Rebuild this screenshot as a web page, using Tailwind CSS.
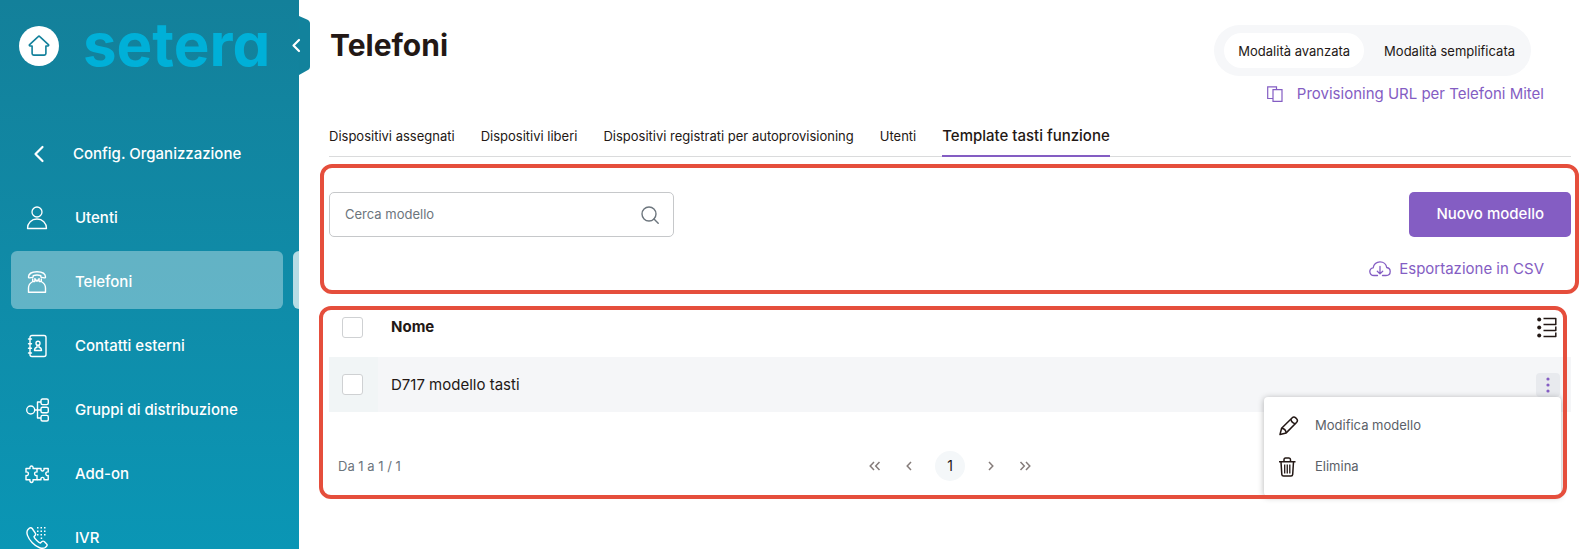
<!DOCTYPE html>
<html lang="it">
<head>
    <meta charset="UTF-8">
    <meta name="viewport" content="width=device-width, initial-scale=1.0">
    <title>Telefoni</title>
    <script src="https://cdn.jsdelivr.net/npm/@tailwindcss/browser@4"></script>
</head>
<body class="flex h-screen overflow-hidden bg-white font-['Inter',sans-serif] text-[13px] text-[#231815]">

    <!-- Sidebar -->
    <aside class="relative flex w-[299px] shrink-0 flex-col bg-linear-to-b from-[#13809a] to-[#0a96b5] text-white">
        <div class="flex h-[123px] shrink-0 items-start pt-[26px] pl-[19px]">
            <a href="#" aria-label="Home" class="flex size-10 items-center justify-center rounded-full bg-white text-[#12809b]">
                <svg class="size-6" viewBox="0 0 24 24" fill="none" stroke="currentColor" stroke-width="1.6" stroke-linejoin="round" stroke-linecap="round">
                    <path d="M11.2 2.6 2.6 10.6c-.6.6-.3 1.4.6 1.4h1.9v7.5c0 1 .6 1.6 1.6 1.6h10.6c1 0 1.6-.6 1.6-1.6V12h1.9c.9 0 1.2-.8.6-1.4L12.8 2.6c-.5-.5-1.1-.5-1.6 0Z"/>
                </svg>
            </a>
            <span class="ml-6 text-[60px] leading-9 font-bold text-[#00b0d8] [font-feature-settings:'cv11']">setera</span>
        </div>

        <nav class="flex min-h-0 flex-1 flex-col gap-1.5 overflow-hidden text-[15px] font-medium">
            <a href="#" class="mr-4 ml-[11px] flex h-[58px] shrink-0 items-center gap-[22px] pt-1 pl-4">
                <svg class="size-6" viewBox="0 0 24 24" fill="none" stroke="currentColor" stroke-width="2.2" stroke-linecap="round" stroke-linejoin="round"><path d="M15.5 5 8.500 12l7 7"/></svg>
                Config. Organizzazione
            </a>
            <a href="#" class="mr-4 ml-[11px] flex h-[58px] shrink-0 items-center gap-[26px] pt-1 pl-3.5">
                <svg class="size-6" viewBox="0 0 24 24" fill="none" stroke="currentColor" stroke-width="1.3" stroke-linejoin="round"><circle cx="12" cy="6" r="5"/><path d="M2.500 22.500c0-5.500 4-9.500 9.500-9.500s9.500 4 9.500 9.500Z"/></svg>
                Utenti
            </a>
            <div class="flex h-[58px] shrink-0 items-stretch justify-between">
                <a href="#" aria-current="page" class="mr-2.5 ml-[11px] flex flex-1 items-center gap-[26px] rounded-md bg-white/35 pt-1 pl-3.5">
                    <svg class="size-6" viewBox="0 0 24 24" fill="none" stroke="currentColor" stroke-width="1.4" stroke-linejoin="round" stroke-linecap="round">
                        <path d="M3.500 7c0-3.500 3.700-5.300 8.500-5.300s8.500 1.800 8.500 5.300c0 .7-.4 1-1 .9l-2.900-.5c-.6-.1-.8-.5-.8-1V5.700c-2.200-.8-5.400-.8-7.600 0v.7c0 .5-.2.900-.8 1l-2.900.5c-.6.1-1-.2-1-.9Z"/>
                        <path d="M7.700 9v2.500C5.500 12.700 3.500 15.500 3.500 18v4.300h17V18c0-2.500-2-5.300-4.200-6.500V9M7.700 11.500h2.200V8.700M16.300 11.500h-2.200V8.700M9.900 8.700l2.100 2.500 2.100-2.500"/>
                    </svg>
                    Telefoni
                </a>
                <span class="w-1.5 rounded-l-md bg-white/70"></span>
            </div>
            <a href="#" class="mr-4 ml-[11px] flex h-[58px] shrink-0 items-center gap-[26px] pt-1 pl-3.5">
                <svg class="size-6" viewBox="0 0 24 24" fill="none" stroke="currentColor" stroke-width="1.4" stroke-linejoin="round" stroke-linecap="round">
                    <rect x="5" y="1.500" width="16" height="21" rx="2"/>
                    <path d="M3.500 5h3M3.500 9.700h3M3.500 14.300h3M3.500 19h3"/>
                    <circle cx="13" cy="9.300" r="2"/>
                    <path d="M12 11.500v1.700c-1.500.3-2.500 1.300-2.500 3.300h7c0-2-1-3-2.500-3.300v-1.700"/>
                </svg>
                Contatti esterni
            </a>
            <a href="#" class="mr-4 ml-[11px] flex h-[58px] shrink-0 items-center gap-[26px] pt-1 pl-3.5">
                <svg class="size-6" viewBox="0 0 24 24" fill="none" stroke="currentColor" stroke-width="1.4" stroke-linejoin="round">
                    <circle cx="5.700" cy="12" r="4"/>
                    <path d="M9.700 12H16M16 4h-3.500v16H16"/>
                    <rect x="16" y="1" width="7.300" height="5.600" rx="1.500"/><rect x="16" y="9.200" width="7.300" height="5.600" rx="1.500"/><rect x="16" y="17.400" width="7.300" height="5.600" rx="1.500"/>
                </svg>
                Gruppi di distribuzione
            </a>
            <a href="#" class="mr-4 ml-[11px] flex h-[58px] shrink-0 items-center gap-[26px] pt-1 pl-3.5">
                <svg class="size-6" viewBox="0 0 24 24" fill="none" stroke="currentColor" stroke-width="1.4" stroke-linejoin="round">
                    <path d="M1 6.500h4c-.8-3.300 3.800-3.300 3 0h4V10c-3.200-.8-3.200 4.300 0 3.500v4.300H8c.8 3.500-3.800 3.500-3 0H1v-4.300c3.200.8 3.200-4.300 0-3.500Z"/>
                    <path d="M12 6.500h4c-.8 3.300 3.800 3.300 3 0h4.200V10c-3.200-.8-3.200 4.300 0 3.500v4.300H19c.8-3.300-3.800-3.300-3 0h-4"/>
                </svg>
                Add-on
            </a>
            <a href="#" class="mr-4 ml-[11px] flex h-[58px] shrink-0 items-center gap-[26px] pt-1 pl-3.5">
                <svg class="size-6" viewBox="0 0 24 24" fill="none" stroke="currentColor" stroke-width="1.4" stroke-linejoin="round">
                    <path d="M4.300 2.300 2.800 3.800c-2 2.500-.3 8 4.500 13s10.200 6.600 13 4.700l1.300-1.300c.7-.7.7-1.500 0-2.200l-2.400-2.400c-.7-.7-1.600-.7-2.200 0l-1.600 1.500c-1.500-.3-5.900-4.600-6.400-6.300l1.200-1.500c.7-.7.5-1.500.1-2.200L7.200 2.500c-.8-1-2-1.100-2.900-.2Z"/>
                    <path d="M12 1.700h10.500M12 5.200h10.500M12 8.700h10.500M15.700 12.200h3" stroke-width="1.500" stroke-dasharray="1.500 2"/>
                </svg>
                IVR
            </a>
        </nav>

        <!-- Collapse handle -->
        <button type="button" aria-label="Chiudi menu" class="absolute top-4 left-full h-[59px] w-[11px]">
            <svg class="absolute top-0 -left-2.5" width="21" height="59" viewBox="0 0 21 59" fill="none">
                <path d="M10 0 18 3.500c2 1 3 2 3 4v43c0 2-1 3-3 4L10 59Z" fill="#12829c"/>
                <path d="m10 24-5.500 5.500L10 35" stroke="#fff" stroke-width="2.2" stroke-linecap="round" stroke-linejoin="round"/>
            </svg>
        </button>
    </aside>

    <main class="min-w-0 flex-1 pt-[25px] pr-[13px] pl-[30px]">
        <header class="flex items-start justify-between">
            <h1 class="pl-px text-[30px] leading-10 font-bold">Telefoni</h1>
            <div class="flex flex-col items-end">
                <div class="mr-10 flex h-[51px] items-center rounded-full bg-[#f6f7f9] pr-4 pl-2.5">
                    <button type="button" aria-pressed="true" class="h-[35px] rounded-full bg-white px-3.5 pt-[3px]">Modalità avanzata</button>
                    <button type="button" aria-pressed="false" class="ml-5 h-[35px] pt-[3px]">Modalità semplificata</button>
                </div>
                <a href="#" class="mt-1.5 mr-[27px] flex h-6 items-center gap-3.5 text-[15px] text-[#845dc3]">
                    <svg class="size-4" viewBox="0 0 16 16" fill="none" stroke="currentColor" stroke-width="1.2"><path d="M6 12.500H.7V.8h8.800v2.800"/><path d="M6 3.600h9v11.700H6Z"/></svg>
                    Provisioning URL per Telefoni Mitel
                </a>
            </div>
        </header>

        <nav class="mt-5 flex gap-[26px] border-b border-[#dadbdc] leading-5">
            <a href="#" class="-mb-px pb-[11px]">Dispositivi assegnati</a>
            <a href="#" class="-mb-px pb-[11px]">Dispositivi liberi</a>
            <a href="#" class="-mb-px pb-[11px]">Dispositivi registrati per autoprovisioning</a>
            <a href="#" class="-mb-px pb-[11px]">Utenti</a>
            <a href="#" aria-current="page" class="-mb-px border-b-2 border-[#845dc3] pb-[9px] text-[15px] font-medium">Template tasti funzione</a>
        </nav>

        <!-- Search and actions -->
        <section class="relative mt-[7px] pt-7 pb-3.5">
            <div class="flex items-start justify-between">
                <div class="flex h-[45px] w-[345px] items-center rounded-[5px] border border-[#c6c8ca] pr-3.5 pl-[15px] text-[#6c757d]">
                    <input type="text" aria-label="Cerca modello" placeholder="Cerca modello" class="min-w-0 flex-1 outline-none placeholder:text-[#6c757d]">
                    <svg class="size-[18px]" viewBox="0 0 18 18" fill="none" stroke="currentColor" stroke-width="1.4" stroke-linecap="round"><circle cx="8" cy="8" r="7"/><path d="m13 13 4.200 4.200"/></svg>
                </div>
                <button type="button" class="h-[45px] rounded-[5px] bg-[#845dc3] px-[27px] text-[15px] font-medium text-white">Nuovo modello</button>
            </div>
            <div class="mt-5 mr-[27px] -mb-px flex justify-end">
                <a href="#" class="flex h-6 items-center gap-2 text-[15px] text-[#845dc3]">
                    <svg width="22" height="16" viewBox="0 0 22 16" fill="none" stroke="currentColor" stroke-width="1.3" stroke-linecap="round" stroke-linejoin="round">
                        <path d="M8.500 14.500H5C2.500 14.500.8 12.900.8 10.600c0-2 1.300-3.500 3.400-3.800C4.500 3.500 7.500.8 11 .8s6.300 2.400 6.700 5.700c2 .3 3.500 1.900 3.500 4 0 2.300-1.700 4-4.200 4h-3.500"/>
                        <path d="M11 5.500v7.200M8.300 10.200l2.700 2.700 2.700-2.700"/>
                    </svg>
                    Esportazione in CSV
                </a>
            </div>
            <div class="pointer-events-none absolute inset-y-0 -right-2 -left-[9px] rounded-xl border-4 border-[#e54e3c]"></div>
        </section>

        <!-- Templates list -->
        <section class="relative mt-3">
            <table class="w-full text-left">
                <thead>
                    <tr class="h-[51px]">
                        <th class="w-[49px] pb-2 pl-[13px]"><input type="checkbox" aria-label="Seleziona tutti" class="block size-[21px] appearance-none rounded-[3px] border border-[#cfd1d3] bg-white"></th>
                        <th class="pb-2 pl-[13px] text-[15px] font-bold">Nome</th>
                        <th class="w-16 pr-3.5 pb-2">
                            <button type="button" aria-label="Colonne" class="ml-auto block">
                                <svg width="20" height="21" viewBox="0 0 20 21" fill="none" stroke="#231815" stroke-width="1.5" stroke-linejoin="round">
                                    <path d="M6.500 1.500h12.300v6H6.500M18.800 9.500v4H6.500M18.800 15.500v4H6.500"/>
                                    <g fill="#231815" stroke="none"><circle cx="2.200" cy="2.500" r="2"/><circle cx="2.200" cy="10.500" r="2"/><circle cx="2.200" cy="18.500" r="2"/></g>
                                </svg>
                            </button>
                        </th>
                    </tr>
                </thead>
                <tbody>
                    <tr class="h-[55px] bg-[#f5f6f8]">
                        <td class="bg-[#f1f5f6] pl-[13px]"><input type="checkbox" aria-label="Seleziona D717 modello tasti" class="block size-[21px] appearance-none rounded-[3px] border border-[#cfd1d3] bg-white"></td>
                        <td class="pt-0.5 pl-[13px] text-[15px]">D717 modello tasti</td>
                        <td class="pr-[11px]">
                            <div class="relative ml-auto w-6">
                                <button type="button" aria-label="Azioni" aria-expanded="true" class="flex size-6 items-center justify-center rounded-sm bg-[#e8eaee]">
                                    <svg width="4" height="16" viewBox="0 0 4 16" fill="#845dc3"><circle cx="2" cy="2" r="1.600"/><circle cx="2" cy="8" r="1.600"/><circle cx="2" cy="14" r="1.600"/></svg>
                                </button>
                                <div role="menu" class="absolute top-full -right-px flex w-[297px] flex-col rounded-sm bg-white pt-[9px] pb-2 shadow-[0_1px_6px_rgba(0,0,0,0.3)]">
                                    <button type="button" role="menuitem" class="flex h-[41px] items-center gap-4 pl-[15px] text-[#5b6168]">
                                        <svg class="size-5" viewBox="0 0 20 20" fill="none" stroke="#231815" stroke-width="1.5" stroke-linejoin="round"><path d="M1 18.500 2.600 12.300 13 2c1.200-1.200 2.500-1.200 3.700-.1l.9.900c1.100 1.200 1.100 2.500-.1 3.700L7.200 16.900Z"/><path d="M11.800 3.200c.5 2.600 1.900 4 4.500 4.500M2.600 12.300c2.500.3 4.300 2.100 4.600 4.600"/></svg>
                                        Modifica modello
                                    </button>
                                    <button type="button" role="menuitem" class="flex h-[41px] items-center gap-4 pl-[15px] text-[#5b6168]">
                                        <svg class="size-5" viewBox="0 0 20 20" fill="none" stroke="#231815" stroke-width="1.5" stroke-linejoin="round"><path d="M0 4.700h16.500M5 4.500V2.800C5 1.600 5.600 1 6.500 1H10c.9 0 1.500.6 1.500 1.800v1.700M2 5l.8 12.400c.1 1.100.7 1.700 1.700 1.700h7.500c1 0 1.600-.6 1.700-1.700L14.500 5"/><path d="M5.700 7.500v9M8.250 7.500v9M10.800 7.500v9" stroke-width="1.3"/></svg>
                                        Elimina
                                    </button>
                                </div>
                            </div>
                        </td>
                    </tr>
                </tbody>
            </table>

            <div class="grid grid-cols-[1fr_auto_1fr] items-center pt-[39px] pb-[18px]">
                <p class="pt-0.5 pl-[9px] text-[#6c757d]">Da 1 a 1 / 1</p>
                <div class="flex items-center gap-[18px] text-[#857c7a]">
                    <button type="button" aria-label="Prima pagina" class="flex w-4 justify-center"><svg width="12" height="10" viewBox="0 0 12 10" fill="none" stroke="currentColor" stroke-width="1.5"><path d="M5 1 1.200 5 5 9M10.500 1 6.700 5l3.800 4"/></svg></button>
                    <button type="button" aria-label="Pagina precedente" class="flex w-4 justify-center"><svg width="6" height="10" viewBox="0 0 6 10" fill="none" stroke="currentColor" stroke-width="1.5"><path d="M5 1 1.200 5 5 9"/></svg></button>
                    <button type="button" aria-current="page" class="size-[30px] rounded-full bg-[#f4f7f9] text-sm text-[#231815]">1</button>
                    <button type="button" aria-label="Pagina successiva" class="flex w-4 justify-center"><svg width="6" height="10" viewBox="0 0 6 10" fill="none" stroke="currentColor" stroke-width="1.5"><path d="M1 1 4.800 5 1 9"/></svg></button>
                    <button type="button" aria-label="Ultima pagina" class="flex w-4 justify-center"><svg width="12" height="10" viewBox="0 0 12 10" fill="none" stroke="currentColor" stroke-width="1.5"><path d="M1.500 1l3.800 4-3.800 4M7 1l3.800 4L7 9"/></svg></button>
                </div>
            </div>
            <div class="pointer-events-none absolute inset-y-0 right-1 -left-2.5 rounded-xl border-4 border-[#e54e3c]"></div>
        </section>
    </main>
</body>
</html>
